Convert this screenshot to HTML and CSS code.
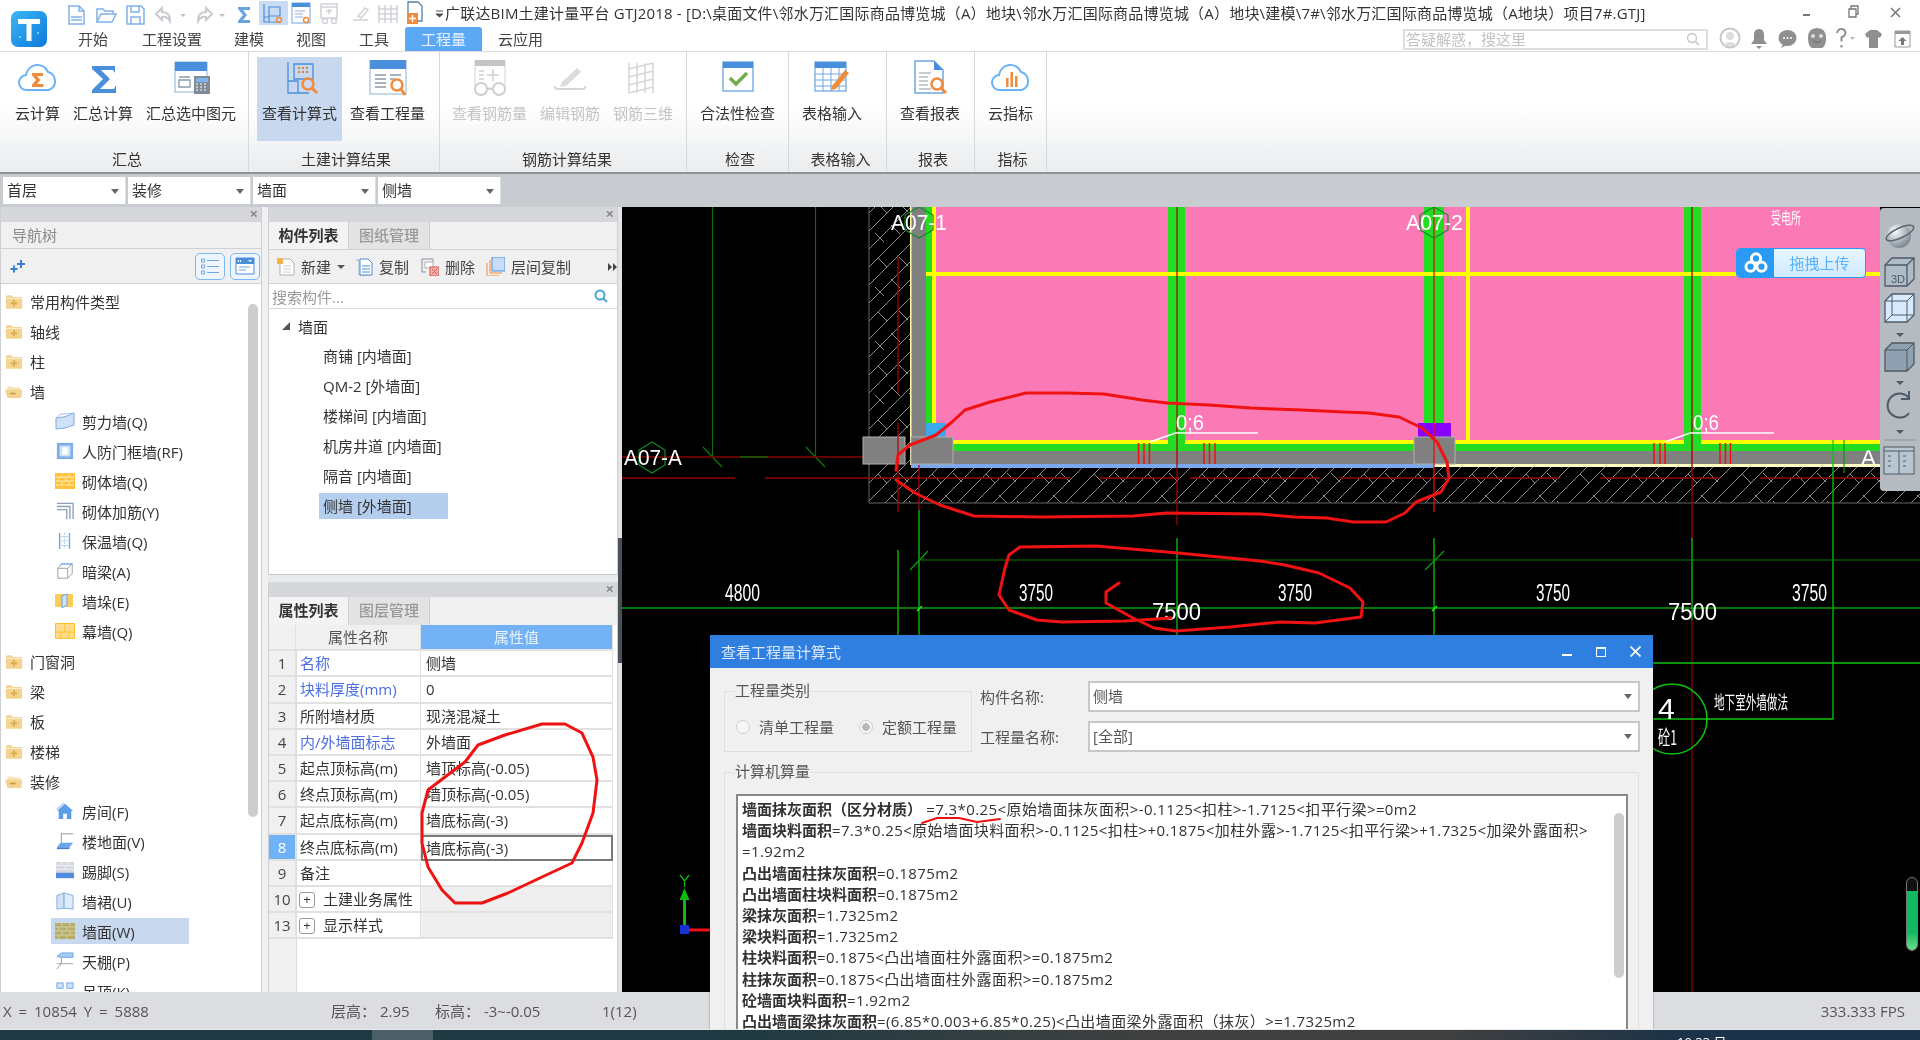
FILE: index.html
```html
<!DOCTYPE html>
<html lang="zh-CN">
<head>
<meta charset="utf-8">
<title>广联达BIM土建计量平台 GTJ2018</title>
<link rel="stylesheet" href="styles.css">
</head>
<body>
<svg class="defs" width="0" height="0" aria-hidden="true">
  <defs>
    <symbol id="folder" viewBox="0 0 20 18"><path d="M1 4 q0-2 2-2 h4 l2 2 h10 v13 H1z" fill="#f3d38f"/><path d="M1 5 h18 v1 H1z" fill="#fff3d6"/><path d="M9 7.500h2v2.500h2.500v2H11v2.500H9V12H6.500v-2H9z" fill="#dca94e"/></symbol>
    <symbol id="folder-open" viewBox="0 0 22 18"><path d="M3 3h5l2 1h9v4H3z" fill="#f8e3b4"/><path d="M0 7 h21 l-1 10 H3z" fill="#f3d38f"/><path d="M6 10.500h7v2H6z" fill="#c89a48"/></symbol>
    <symbol id="shear" viewBox="0 0 20 18"><path d="M1 6 Q10 6 19 1 V13 Q10 17 1 17z" fill="#cfe2f8" stroke="#7ba9e0"/><path d="M1 6 L6 2 Q14 2 19 1" fill="none" stroke="#9dc2ec"/></symbol>
    <symbol id="frame" viewBox="0 0 20 20"><path d="M1 1h18v18H1z" fill="#7eaee8"/><path d="M4 4h12v12H4z" fill="#cfe2f8"/><path d="M7 6h6v8H7z" fill="#fff"/></symbol>
    <symbol id="brick" viewBox="0 0 20 16"><path d="M0 0h20v16H0z" fill="#ffc23a"/><path d="M1 4h18M1 8h18M1 12h18M7 1v3M14 1v3M4 4v4M11 4v4M17 4v4M7 8v4M14 8v4" stroke="#ffe9b5" fill="none"/></symbol>
    <symbol id="rebar" viewBox="0 0 20 20"><path d="M1 1.500H19V19M1 5H15.500V19M1 8.500H12V19" fill="none" stroke="#8aa0b8" stroke-width="1.500"/></symbol>
    <symbol id="insul" viewBox="0 0 20 20"><path d="M4 1v18M15 1v18" stroke="#6ba6ea" stroke-width="1.500"/><path d="M9.500 1v18" stroke="#9cc4f0" stroke-dasharray="2 1.500"/><path d="M5 5h9M5 10h9M5 15h9" stroke="#b9d4f2"/></symbol>
    <symbol id="beam" viewBox="0 0 20 20"><path d="M2 7 L7 2 H18 V13 L13 18 H2z" fill="#fff" stroke="#8f9aa6"/><path d="M2 7H13V18M13 7 L18 2" fill="none" stroke="#8f9aa6"/><path d="M3 3 L7 1 H18 V3 H7z" fill="#8db8ec"/></symbol>
    <symbol id="stub" viewBox="0 0 20 16"><path d="M0 1h18v13H0z" fill="#ffcb57"/><path d="M7 3l5-2v11l-5 3z" fill="#cfe2f8" stroke="#6e9fdc"/></symbol>
    <symbol id="curtain" viewBox="0 0 20 16"><path d="M.500.500h19v15H.500z" fill="#ffdc8a" stroke="#ffbe2e"/><path d="M10 1v8M1 9h18M6 9v6M14 9v6" stroke="#ffbe2e" fill="none"/></symbol>
    <symbol id="room" viewBox="0 0 20 20"><path d="M10 2 L19 10 H17 V19 H12 V13 H8 V19 H3 V10 H1z" fill="#5a9eea"/><path d="M1 8 L9 1" stroke="#a8cbf2" stroke-width="1.500"/></symbol>
    <symbol id="floor" viewBox="0 0 20 20"><path d="M6 1v11" stroke="#8a9098"/><path d="M6 2h13" stroke="#8a9098"/><path d="M5 12h14l-4 5H1z" fill="#6aa6ea"/><path d="M1 17h14v2H1z" fill="#3f7fd0"/></symbol>
    <symbol id="skirt" viewBox="0 0 20 20"><path d="M0 0h20v13H0z" fill="#d5d9de"/><path d="M0 4h20M0 8h20M6 0v4M14 0v4M10 4v4" stroke="#f2f3f5" fill="none"/><path d="M0 12h20v6H0z" fill="#4f8ce0"/></symbol>
    <symbol id="dado" viewBox="0 0 20 20"><path d="M1 4 L9 1 V18 L1 19z" fill="#cfe2f8" stroke="#7ba9e0"/><path d="M9 1 L19 4 V19 L9 18z" fill="#dfecfb" stroke="#7ba9e0"/></symbol>
    <symbol id="wallface" viewBox="0 0 20 16"><path d="M0 0h20v16H0z" fill="#b6ad6a"/><path d="M0 4h20M0 8h20M0 12h20M7 0v4M15 0v4M4 4v4M12 4v4M7 8v4M15 8v4M4 12v4M12 12v4" stroke="#d4d0a2" fill="none"/></symbol>
    <symbol id="ceil" viewBox="0 0 20 20"><path d="M1 5 L6 1 H19 V6 H6z" fill="#a8cbf2" stroke="#6ba6ea"/><path d="M6 6v7M1 13H19M6 13 L1 19" stroke="#8f9aa6" fill="none"/></symbol>
    <symbol id="hang" viewBox="0 0 20 20"><path d="M1 1h7v6H1zM12 1h7v6h-7z" fill="#cfe2f8" stroke="#6ba6ea"/></symbol>
  </defs>
</svg>

<div class="app">
  <header class="top">
    <div class="logo-col">
      <svg class="logo" viewBox="0 0 36 36"><defs><linearGradient id="lg" x1="0" y1="0" x2="1" y2="1"><stop offset="0" stop-color="#3bb8f5"/><stop offset="1" stop-color="#0d78dc"/></linearGradient></defs><rect width="36" height="36" rx="7" fill="url(#lg)"/><path d="M7 8h22v5h-8.500v17h-5V13H7z" fill="#fff"/><circle cx="9" cy="26" r="1" fill="#9fe0ff"/><circle cx="27" cy="22" r="1" fill="#9fe0ff"/></svg>
    </div>
    <div class="top-main">
      <div class="title-row">
        <svg class="qat" viewBox="60 0 384 27">
          <g fill="none" stroke="#7eb2e8" stroke-width="1.500">
            <path d="M69 6h10l5 5v13H69zM79 6v5h5M71 17h11M71 20h11"/>
            <path d="M97 22V9h6l2 2h8v3M97 22l4-8h15l-4 8z"/>
            <path d="M127 6h14l3 3v15h-17zM131 6v6h8V6M131 24v-7h9v7"/>
          </g>
          <g fill="none" stroke="#c7cbd0" stroke-width="2">
            <path d="M156 14l6-6v4q8 0 8 9q-3-5-8-4v3z"/>
            <path d="M212 14l-6-6v4q-8 0-8 9q3-5 8-4v3z"/>
          </g>
          <path d="M180 14h6l-3 3zM219 14h6l-3 3z" fill="#c0c4c8"/>
          <path d="M238 7h12v3h-7l4 5-4 5h7v3h-12v-2l5-6-5-6z" fill="#6aa3e0"/>
          <rect x="259" y="1" width="29" height="24" fill="#c9dcf3"/>
          <g fill="none" stroke="#4a8fdc" stroke-width="1.200"><path d="M264 4v18h16M264 17h5v5M269 7h11v9h-11z"/></g>
          <circle cx="279" cy="20" r="2.500" fill="none" stroke="#f08c3c" stroke-width="1.500"/>
          <rect x="292" y="3" width="18" height="20" fill="#fff" stroke="#6ea6e2"/><rect x="292" y="3" width="18" height="4" fill="#4a8fdc"/><path d="M295 11h10M295 14h8M295 17h8" stroke="#8db2d9"/><circle cx="306" cy="20" r="2.500" fill="none" stroke="#f08c3c" stroke-width="1.500"/>
          <g fill="none" stroke="#cfd2d6" stroke-width="1.500"><path d="M321 4h16v14h-16zM321 7h16M326 11h6M329 9v5"/><circle cx="325" cy="21" r="2.500"/><circle cx="334" cy="21" r="2.500"/>
          <path d="M353 20h15M358 16l7-8 3 2-7 8z"/>
          <path d="M379 5v18M385 5v18M391 5v18M397 5v18M379 9h18M379 14h18M379 19h18"/></g>
          <path d="M410 2h8l4 4v15h-14V2z" fill="#fff" stroke="#5a7ea8" stroke-width="1.300"/><rect x="407" y="13" width="11" height="11" fill="#f08c3c"/><path d="M412.500 15v7M409 18.500h7" stroke="#fff" stroke-width="1.500"/>
          <path d="M436 11h7M436 14h7l-3.500 3z" fill="#555" stroke="#555"/>
        </svg>
        <div class="app-title">广联达BIM土建计量平台 GTJ2018 - [D:\桌面文件\邻水万汇国际商品博览城（A）地块\邻水万汇国际商品博览城（A）地块\建模\7#\邻水万汇国际商品博览城（A地块）项目7#.GTJ]</div>
        <svg class="winctl" viewBox="1800 0 120 27">
          <path d="M1803 14h7v2h-7z" fill="#777"/>
          <path d="M1849 9h7v8h-7zM1851 9V6h7v8h-2" fill="none" stroke="#777" stroke-width="1.300"/>
          <path d="M1891 8l9 9M1900 8l-9 9" stroke="#777" stroke-width="1.500"/>
        </svg>
      </div>
      <div class="tab-row">
        <nav class="tabs">
          <span class="tab">开始</span><span class="tab t2">工程设置</span><span class="tab">建模</span><span class="tab">视图</span><span class="tab t5">工具</span><span class="tab active">工程量</span><span class="tab">云应用</span>
        </nav>
        <div class="search">
          <span>答疑解惑，搜这里</span>
          <svg class="search-ico" viewBox="0 0 14 14"><circle cx="6" cy="6" r="4.500" fill="none" stroke="#c4c4c4" stroke-width="1.300"/><path d="M9.500 9.500l3.500 3.500" stroke="#c4c4c4" stroke-width="1.500"/></svg>
        </div>
        <svg class="user-icons" viewBox="1715 27 200 24">
          <circle cx="1731" cy="38" r="9.500" fill="#fff" stroke="#c8c8c8" stroke-width="2"/><circle cx="1731" cy="36" r="4" fill="#ddd"/><path d="M1723 46q8-8 16 0" fill="#ddd"/>
          <path d="M1760 29q5 0 5 6v5l3 4h-16l3-4v-5q0-6 5-6zM1757 46h6l-3 3z" fill="#8f8f8f"/>
          <ellipse cx="1788.500" cy="38" rx="9" ry="8" fill="#8f8f8f"/><path d="M1784 44l-2 4 6-3z" fill="#8f8f8f"/><circle cx="1785" cy="38" r="1" fill="#fff"/><circle cx="1788.500" cy="38" r="1" fill="#fff"/><circle cx="1792" cy="38" r="1" fill="#fff"/>
          <path d="M1818 28q9 0 9 10q0 8-4 10h-10q-4-2-4-10q0-10 9-10z" fill="#8f8f8f"/><circle cx="1814" cy="36" r="2" fill="#ddd"/><circle cx="1822" cy="36" r="2" fill="#ddd"/><path d="M1814 41q4 3 8 0" fill="none" stroke="#666"/>
          <path d="M1838 33q1-4 4.500-4t4 3.500q0 3-4 5v4M1842.500 45v2.500" fill="none" stroke="#8f8f8f" stroke-width="2"/><path d="M1851 37h5l-2.500 3z" fill="#bbb"/>
          <path d="M1871 30h7l5 4-2 4-2-1v11h-9V37l-2 1-2-4z" fill="#8f8f8f"/>
          <path d="M1896 31h15v16h-15z" fill="#fff" stroke="#999"/><path d="M1896 31h15v3h-15z" fill="#999"/><path d="M1903.500 37l4 4h-2.500v4h-3v-4h-2.500z" fill="#777"/>
        </svg>
      </div>
    </div>
  </header>

  <section class="ribbon">
    <div class="group g1">
      <div class="items">
        <div class="rbtn"><svg class="ricon" viewBox="0 0 40 36"><path d="M9 30a7.500 7.500 0 0 1-1-15a11.500 11.500 0 0 1 22-3a9.500 9.500 0 0 1 1 18z" fill="none" stroke="#6db3f2" stroke-width="2"/><path d="M14 13h11v3h-6l3.500 4-3.500 4h6.500v3H14v-2.500l4-4.500-4-4.500z" fill="#f08c3c"/></svg><span>云计算</span></div>
        <div class="rbtn"><svg class="ricon" viewBox="0 0 40 36"><path d="M9 6h23v7l-2-3H18l9 9-10 10h14l2-4v8H9v-3l11-11L9 9z" fill="#4a8fdc"/></svg><span>汇总计算</span></div>
        <div class="rbtn"><svg class="ricon" viewBox="0 0 40 36"><rect x="4" y="2" width="32" height="30" fill="#fff" stroke="#8db2d9"/><rect x="4" y="2" width="32" height="9" fill="#4a8fdc"/><path d="M8 17h11M8 20h11v7H8z" fill="none" stroke="#8a9aa8" stroke-width="1.300"/><rect x="23" y="16" width="16" height="18" fill="#7f8b96"/><rect x="25" y="18" width="12" height="4" fill="#7fb4ec"/><path d="M25 24h12M25 27h12M25 30h12" stroke="#fff" stroke-dasharray="2 2"/></svg><span>汇总选中图元</span></div>
      </div>
      <div class="glabel label-a">汇总</div>
    </div>
    <div class="group g2">
      <div class="items">
        <div class="rbtn on"><svg class="ricon" viewBox="0 0 40 36"><path d="M8 2v31h21M8 21h10v12M14 4h19v15H14z" fill="none" stroke="#4a8fdc" stroke-width="1.300"/><path d="M18 7h2v2h-2zM22 7h2v2h-2zM26 7h2v2h-2zM18 11h2v2h-2zM22 11h2v2h-2zM26 11h2v2h-2z" fill="#d9833f"/><circle cx="28" cy="24" r="5.500" fill="none" stroke="#f08c3c" stroke-width="2.500"/><path d="M32 28l5 5" stroke="#f08c3c" stroke-width="3"/></svg><span>查看计算式</span></div>
        <div class="rbtn"><svg class="ricon" viewBox="0 0 40 36"><rect x="2" y="0" width="36" height="34" fill="#fff" stroke="#8db2d9"/><rect x="2" y="0" width="36" height="9" fill="#4a8fdc"/><path d="M7 15h11M22 15h11M7 19h11M7 23h11M7 27h11M22 19h5" stroke="#8c99a6" stroke-width="1.300"/><circle cx="29" cy="25" r="5.500" fill="#fff" stroke="#f08c3c" stroke-width="2.500"/><path d="M33 29l4 6" stroke="#f08c3c" stroke-width="3"/></svg><span>查看工程量</span></div>
      </div>
      <div class="glabel label-b">土建计算结果</div>
    </div>
    <div class="group g3">
      <div class="items">
        <div class="rbtn off"><svg class="ricon" viewBox="0 0 40 36"><rect x="5" y="0" width="30" height="28" fill="#fff" stroke="#d4d4d4"/><rect x="5" y="0" width="30" height="6" fill="#c4c4c4"/><path d="M9 11h5M9 15h5M9 19h5M17 15h12M23 9v12" stroke="#cfcfcf" stroke-width="1.500"/><circle cx="11" cy="29" r="6" fill="#fff" stroke="#cfcfcf" stroke-width="2"/><circle cx="29" cy="29" r="6" fill="#fff" stroke="#cfcfcf" stroke-width="2"/><path d="M17 29h6" stroke="#cfcfcf" stroke-width="2"/></svg><span>查看钢筋量</span></div>
        <div class="rbtn off"><svg class="ricon" viewBox="0 0 40 36"><path d="M5 26q-1 3 3 3h24q4 0 3-3" fill="none" stroke="#d6d6d6" stroke-width="2"/><path d="M12 22l15-14 4 4-15 14-6 1z" fill="#dcdcdc"/></svg><span>编辑钢筋</span></div>
        <div class="rbtn off"><svg class="ricon" viewBox="0 0 40 36"><path d="M6 3v30M14 3v30M22 3v30M30 3v30M6 9L30 3M6 17l24-6M6 25l24-6M6 33l24-6" fill="none" stroke="#d6d6d6" stroke-width="1.500"/></svg><span>钢筋三维</span></div>
      </div>
      <div class="glabel label-c">钢筋计算结果</div>
    </div>
    <div class="group g4">
      <div class="items">
        <div class="rbtn"><svg class="ricon" viewBox="0 0 40 36"><rect x="5" y="2" width="30" height="29" fill="#fff" stroke="#7eaee8" stroke-width="1.500"/><rect x="5" y="2" width="30" height="6" fill="#4a8fdc"/><path d="M12 18l6 6 11-11" fill="none" stroke="#6fae4f" stroke-width="3.500"/></svg><span>合法性检查</span></div>
      </div>
      <div class="glabel label-d">检查</div>
    </div>
    <div class="group g5">
      <div class="items">
        <div class="rbtn"><svg class="ricon" viewBox="0 0 40 36"><rect x="3" y="2" width="31" height="29" fill="#fff" stroke="#4a8fdc"/><rect x="3" y="2" width="31" height="6" fill="#4a8fdc"/><path d="M3 14h31M3 20h31M3 26h31M11 8v23M19 8v23M27 8v23" stroke="#6ea6e2"/><path d="M20 26L33 10l4 3-13 16-5 1z" fill="#f08c3c"/></svg><span>表格输入</span></div>
      </div>
      <div class="glabel label-e">表格输入</div>
    </div>
    <div class="group g6">
      <div class="items">
        <div class="rbtn"><svg class="ricon" viewBox="0 0 40 36"><path d="M5 1h19l9 9v23H5z" fill="#fff" stroke="#6ea6e2" stroke-width="1.500"/><path d="M24 1l9 9h-9z" fill="#4a8fdc"/><path d="M9 13h12M9 17h9M9 21h9M9 25h9M9 29h12" stroke="#8c99a6"/><circle cx="27" cy="24" r="5.500" fill="#fff" stroke="#f08c3c" stroke-width="2.500"/><path d="M31 28l5 5" stroke="#f08c3c" stroke-width="3"/></svg><span>查看报表</span></div>
      </div>
      <div class="glabel label-f">报表</div>
    </div>
    <div class="group g7">
      <div class="items">
        <div class="rbtn"><svg class="ricon" viewBox="0 0 40 36"><path d="M9 30a7.500 7.500 0 0 1-1-15a11.500 11.500 0 0 1 22-3a9.500 9.500 0 0 1 1 18z" fill="none" stroke="#6db3f2" stroke-width="2"/><path d="M15 18h2.500v9H15zM19.500 12H22v15h-2.500zM24 16h2.500v11H24z" fill="#f08c3c"/></svg><span>云指标</span></div>
      </div>
      <div class="glabel label-g">指标</div>
    </div>
  </section>

  <section class="selectors">
    <div class="sel">首层</div><div class="sel">装修</div><div class="sel">墙面</div><div class="sel">侧墙</div>
  </section>

  <main class="main">
    <aside class="nav">
      <div class="panel-head"><span class="x">×</span></div>
      <div class="nav-title">导航树</div>
      <div class="nav-tools">
        <svg class="stars" viewBox="0 0 16 14"><path d="M3 6.500h2V9h2.500v2H5v2.500H3V11H.500V9H3zM10 1h2v3h3v2h-3v3h-2V6H7V4h3z" fill="#3a7fd0"/></svg>
        <div class="nav-btns">
          <span class="nbtn"><svg viewBox="0 0 20 18"><path d="M1.500 2h3v3h-3zM1.500 8h3v3h-3zM1.500 14h3v3h-3z" fill="none" stroke="#6ea6e2"/><path d="M7 3.500h12M7 9.500h12M7 15.500h12" stroke="#6ea6e2"/></svg></span>
          <span class="nbtn"><svg viewBox="0 0 20 18"><path d="M1 1h18v16H1z" fill="#fff" stroke="#4a8fdc"/><path d="M1 1h18v6H1z" fill="#4a8fdc"/><path d="M4 10h11M4 13h7" stroke="#6ea6e2"/><path d="M3 3h1v2H3zM5 3h1v2H5zM13 3h4l-2 2z" fill="#fff"/></svg></span>
        </div>
      </div>
      <div class="tree">
        <div class="row"><svg class="fi"><use href="#folder"/></svg>常用构件类型</div>
        <div class="row"><svg class="fi"><use href="#folder"/></svg>轴线</div>
        <div class="row"><svg class="fi"><use href="#folder"/></svg>柱</div>
        <div class="row"><svg class="fi"><use href="#folder-open"/></svg>墙</div>
        <div class="row l2"><svg class="ci"><use href="#shear"/></svg>剪力墙(Q)</div>
        <div class="row l2"><svg class="ci"><use href="#frame"/></svg>人防门框墙(RF)</div>
        <div class="row l2"><svg class="ci"><use href="#brick"/></svg>砌体墙(Q)</div>
        <div class="row l2"><svg class="ci"><use href="#rebar"/></svg>砌体加筋(Y)</div>
        <div class="row l2"><svg class="ci"><use href="#insul"/></svg>保温墙(Q)</div>
        <div class="row l2"><svg class="ci"><use href="#beam"/></svg>暗梁(A)</div>
        <div class="row l2"><svg class="ci"><use href="#stub"/></svg>墙垛(E)</div>
        <div class="row l2"><svg class="ci"><use href="#curtain"/></svg>幕墙(Q)</div>
        <div class="row"><svg class="fi"><use href="#folder"/></svg>门窗洞</div>
        <div class="row"><svg class="fi"><use href="#folder"/></svg>梁</div>
        <div class="row"><svg class="fi"><use href="#folder"/></svg>板</div>
        <div class="row"><svg class="fi"><use href="#folder"/></svg>楼梯</div>
        <div class="row"><svg class="fi"><use href="#folder-open"/></svg>装修</div>
        <div class="row l2"><svg class="ci"><use href="#room"/></svg>房间(F)</div>
        <div class="row l2"><svg class="ci"><use href="#floor"/></svg>楼地面(V)</div>
        <div class="row l2"><svg class="ci"><use href="#skirt"/></svg>踢脚(S)</div>
        <div class="row l2"><svg class="ci"><use href="#dado"/></svg>墙裙(U)</div>
        <div class="row l2 sel-row"><svg class="ci"><use href="#wallface"/></svg>墙面(W)</div>
        <div class="row l2"><svg class="ci"><use href="#ceil"/></svg>天棚(P)</div>
        <div class="row l2"><svg class="ci"><use href="#hang"/></svg>吊顶(K)</div>
        <div class="vbar"></div>
      </div>
    </aside>

    <div class="midcol">
      <section class="comp">
        <div class="panel-head"><span class="x">×</span></div>
        <div class="ptabs"><span class="ptab active">构件列表</span><span class="ptab">图纸管理</span></div>
        <div class="ctools">
          <svg class="cti t-new" viewBox="0 0 18 18"><path d="M3 1h10l4 4v12H3z" fill="#fff" stroke="#a9b0b8"/><path d="M6 8h8M6 11h8M6 14h8" stroke="#c8ccd0"/><path d="M0 0h6v6H0z" fill="#f6b04c"/></svg><span class="ct ct-new">新建</span><i class="caret"></i>
          <svg class="cti t-copy" viewBox="0 0 18 18"><path d="M1 2h3v15h11" fill="none" stroke="#a9b0b8"/><path d="M5 1h8l4 4v12H5z" fill="#fff" stroke="#4a8fdc"/><path d="M7 8h8M7 11h8M7 14h8" stroke="#4a8fdc"/></svg><span class="ct ct-copy">复制</span>
          <svg class="cti t-del" viewBox="0 0 18 18"><path d="M1 1h11v3M1 1v13h4" fill="none" stroke="#8a9098"/><path d="M4 4h8v6H4z" fill="#fff" stroke="#a9b0b8"/><rect x="9" y="9" width="9" height="9" fill="#f4b4ae" stroke="#d6504a"/><path d="M11 11l5 5M16 11l-5 5" stroke="#d6504a"/></svg><span class="ct ct-del">删除</span>
          <svg class="cti t-floor" viewBox="0 0 19 19"><rect x="6" y="0" width="13" height="14" fill="#c8dcf6" stroke="#4a8fdc"/><path d="M4 3v13h12M1 6v13h12" fill="none" stroke="#f08c3c"/></svg><span class="ct ct-floor">层间复制</span>
          <svg class="more" viewBox="0 0 10 8"><path d="M0 0l4 4-4 4zM5 0l4 4-4 4z" fill="#444"/></svg>
        </div>
        <div class="csearch"><span>搜索构件...</span><svg viewBox="0 0 14 14"><circle cx="6" cy="6" r="4.500" fill="none" stroke="#4aa3d8" stroke-width="2"/><path d="M9.500 9.500l3.500 3.500" stroke="#4aa3d8" stroke-width="2"/></svg></div>
        <div class="ctree">
          <div class="crow root"><i class="tri"></i>墙面</div>
          <div class="crow"><span>商铺 [内墙面]</span></div>
          <div class="crow"><span>QM-2 [外墙面]</span></div>
          <div class="crow"><span>楼梯间 [内墙面]</span></div>
          <div class="crow"><span>机房井道 [内墙面]</span></div>
          <div class="crow"><span>隔音 [内墙面]</span></div>
          <div class="crow cur"><span>侧墙 [外墙面]</span></div>
        </div>
      </section>
      <div class="hsplit"></div>
      <section class="props">
        <div class="panel-head"><span class="x">×</span></div>
        <div class="ptabs tall"><span class="ptab active">属性列表</span><span class="ptab">图层管理</span></div>
        <div class="ptable">
          <div class="grid">
            <div class="c idx"></div><div class="c hd">属性名称</div><div class="c hd val">属性值</div>
            <div class="c idx">1</div><div class="c nm link">名称</div><div class="c">侧墙</div>
            <div class="c idx">2</div><div class="c nm link">块料厚度(mm)</div><div class="c">0</div>
            <div class="c idx">3</div><div class="c nm">所附墙材质</div><div class="c">现浇混凝土</div>
            <div class="c idx">4</div><div class="c nm link">内/外墙面标志</div><div class="c">外墙面</div>
            <div class="c idx">5</div><div class="c nm">起点顶标高(m)</div><div class="c">墙顶标高(-0.05)</div>
            <div class="c idx">6</div><div class="c nm">终点顶标高(m)</div><div class="c">墙顶标高(-0.05)</div>
            <div class="c idx">7</div><div class="c nm">起点底标高(m)</div><div class="c">墙底标高(-3)</div>
            <div class="c idx cur">8</div><div class="c nm">终点底标高(m)</div><div class="c focus">墙底标高(-3)</div>
            <div class="c idx">9</div><div class="c nm">备注</div><div class="c"></div>
            <div class="c idx">10</div><div class="c nm grp"><i class="plus">+</i>土建业务属性</div><div class="c shade"></div>
            <div class="c idx">13</div><div class="c nm grp"><i class="plus">+</i>显示样式</div><div class="c shade"></div>
          </div>
        </div>
      </section>
    </div>

    <div class="vsplit"><div class="vthumb"></div></div>

    <div class="cad">
      <svg class="drawing" viewBox="622 207 1298 785" preserveAspectRatio="none">
        <defs>
          <pattern id="hatch" width="54" height="54" patternUnits="userSpaceOnUse" x="869" y="465">
            <path d="M-4 22L22-4M-4 40L40-4M-4 58L58-4M14 58L58 14M32 58L58 32M9 9l9 9M30 8l9 9M22 30l9 9M40 36l9 9M6 38l9 9" stroke="#8c8c8c" fill="none"/>
          </pattern>
        </defs>
        <rect x="622" y="207" width="1298" height="785" fill="#000"/>
        <rect x="869" y="207" width="42" height="296" fill="url(#hatch)"/>
        <rect x="869" y="465" width="1051" height="38" fill="url(#hatch)"/>
        <path d="M869 207V503H1920" fill="none" stroke="#666"/>
        <rect x="936" y="207" width="944" height="233" fill="#fb7ab6"/>
        <!-- dark axis lines -->
        <path d="M712.500 207V457M815.500 207V457" stroke="#0a6a0a" stroke-width="1.200"/>
        <path d="M703 447l19 20M806 447l19 20" stroke="#0a7a0a" stroke-width="1.200"/>
        <path d="M622 457H863" stroke="#8a0000" stroke-width="1.400"/>
        <path d="M740 457h28" stroke="#0a6a0a" stroke-width="1.400"/>
        <path d="M622 478H735M765 478H1070M1100 478H1180M1190 478H1320M1340 478H1560M1600 478H1720M1760 478H1880" stroke="#9a0000" stroke-width="1.400"/>
        <!-- walls -->
        <rect x="911" y="207" width="15" height="258" fill="#808080"/>
        <rect x="910" y="207" width="1.500" height="258" fill="#ffffa8"/>
        <rect x="926" y="207" width="6" height="243" fill="#22dd22"/>
        <rect x="932" y="207" width="4" height="237" fill="#ffff00"/>
        <rect x="926" y="444" width="954" height="7" fill="#22dd22"/>
        <rect x="936" y="440" width="944" height="4" fill="#ffff00"/>
        <rect x="1168" y="207" width="17" height="243" fill="#22dd22"/>
        <rect x="1424" y="207" width="20" height="243" fill="#22dd22"/>
        <rect x="1684" y="207" width="17" height="243" fill="#22dd22"/>
        <rect x="1466" y="207" width="4" height="237" fill="#ffff00"/>
        <rect x="926" y="272" width="954" height="4" fill="#ffff00"/>
        <rect x="911" y="451" width="969" height="13" fill="#808080"/>
        <rect x="911" y="464" width="523" height="4" fill="#7aa8ef"/>
        <rect x="1434" y="464" width="446" height="3" fill="#ffffc4"/>
        <rect x="926" y="423" width="20" height="14" fill="#3ca8f0"/>
        <rect x="1418" y="423" width="33" height="14" fill="#8a00ff"/>
        <g fill="#808080" stroke="#b0b0b0"><rect x="863" y="437" width="42" height="27"/><rect x="911" y="437" width="42" height="27"/><rect x="1414" y="437" width="41" height="27"/></g>
        <path d="M1138.500 443v21M1144 443v21M1149.500 443v21M1204 443v21M1209.500 443v21M1215 443v21M1654 443v21M1660 443v21M1665 443v21M1720 443v21M1725.500 443v21M1730.500 443v21" stroke="#ee1111" stroke-width="1.500"/>
        <!-- verticals -->
        <path d="M898 257V393M898 423V512M919 465V510" stroke="#b00000" stroke-width="1.200"/>
        <path d="M1177 207V525" stroke="#a00000" stroke-width="1.200"/>
        <path d="M1434 207V512" stroke="#e01010" stroke-width="1.300"/>
        <path d="M1692 207V540" stroke="#a00000" stroke-width="1.300"/>
        <path d="M1692 620V992" stroke="#8a0000" stroke-width="1.300"/>
        <path d="M1177 538V640M1434 538V640M1692 538V620M898 550V640M919 510V640M1833 440V719" stroke="#0cc40c" stroke-width="1.300"/>
        <path d="M1844 440V473" stroke="#0a9a0a" stroke-width="1.200"/>
        <path d="M919 560H1920" stroke="#0a7a0a" stroke-width="1.200"/>
        <path d="M622 608H1920" stroke="#0aa00a" stroke-width="1.500"/>
        <path d="M1653 663H1920M1653 719H1833" stroke="#0cc40c" stroke-width="1.300"/>
        <path d="M910 570l18-19M1425 570l19-19" stroke="#0aa00a" stroke-width="1.200"/>
        <path d="M917 611l5-5M1432 611l5-5" stroke="#2dea2d" stroke-width="1.500"/>
        <polygon points="919,207 933,215 933,230 919,238 905,230 905,215" fill="none" stroke="#0f8a2a" stroke-width="1.200"/>
        <polygon points="1434,207 1448,215 1448,230 1434,238 1420,230 1420,215" fill="none" stroke="#0f8a2a" stroke-width="1.200"/>
        <polygon points="652,442 665,450 665,465 652,473 639,465 639,450" fill="none" stroke="#0f8a2a" stroke-width="1.200"/>
        <circle cx="1672" cy="719" r="35" fill="none" stroke="#0cc40c" stroke-width="1.500"/>
        <!-- leaders -->
        <path d="M1150 442L1175.500 433H1258M1665 442L1690 433H1774" fill="none" stroke="#fff" stroke-width="1.500"/>
        <!-- drawing text -->
        <g class="cadtxt">
          <text x="891" y="230" font-size="22" textLength="56" lengthAdjust="spacingAndGlyphs">A07-1</text>
          <text x="1406" y="230" font-size="22" textLength="57" lengthAdjust="spacingAndGlyphs">A07-2</text>
          <text x="624" y="465" font-size="22" textLength="58" lengthAdjust="spacingAndGlyphs">A07-A</text>
          <text x="1861" y="465" font-size="22">A</text>
          <text x="1176" y="430" font-size="22" textLength="28" lengthAdjust="spacingAndGlyphs">0;6</text>
          <text x="1693" y="430" font-size="22" textLength="26" lengthAdjust="spacingAndGlyphs">0;6</text>
          <text x="725" y="601" font-size="24" textLength="35" lengthAdjust="spacingAndGlyphs">4800</text>
          <text x="1019" y="601" font-size="24" textLength="34" lengthAdjust="spacingAndGlyphs">3750</text>
          <text x="1278" y="601" font-size="24" textLength="34" lengthAdjust="spacingAndGlyphs">3750</text>
          <text x="1536" y="601" font-size="24" textLength="34" lengthAdjust="spacingAndGlyphs">3750</text>
          <text x="1792" y="601" font-size="24" textLength="35" lengthAdjust="spacingAndGlyphs">3750</text>
          <text x="1152" y="620" font-size="24" textLength="49" lengthAdjust="spacingAndGlyphs">7500</text>
          <text x="1668" y="620" font-size="24" textLength="49" lengthAdjust="spacingAndGlyphs">7500</text>
          <text x="1771" y="224" font-size="16" class="cjk" textLength="30" lengthAdjust="spacingAndGlyphs">受电所</text>
          <text x="1658" y="719" font-size="30">4</text>
          <text x="1658" y="745" font-size="20" class="cjk" textLength="19" lengthAdjust="spacingAndGlyphs">砼1</text>
          <text x="1714" y="709" font-size="18" class="cjk" textLength="74" lengthAdjust="spacingAndGlyphs">地下室外墙做法</text>
        </g>
        <!-- axis gizmo -->
        <path d="M684.500 930V893" stroke="#0fb80f" stroke-width="3"/><path d="M684.500 888l-5 12h10z" fill="#0fb80f"/>
        <path d="M684.500 930H712" stroke="#f01010" stroke-width="3"/>
        <rect x="680" y="925" width="9" height="9" fill="#1a30d0"/>
        <path d="M680 875l4.500 6 4.500-6M684.500 881v6" fill="none" stroke="#0fb80f" stroke-width="1.300"/>
      </svg>
      <div class="upload">
        <span class="up-ico"><svg viewBox="0 0 26 24"><g fill="none" stroke="#fff" stroke-width="3.200"><circle cx="13" cy="7" r="5"/><circle cx="7" cy="16" r="5"/><circle cx="19" cy="16" r="5"/></g></svg></span>
        <span class="up-txt">拖拽上传</span>
      </div>
      <div class="toolstrip">
        <svg viewBox="1880 208 40 283">
          <defs><radialGradient id="ball" cx=".35" cy=".3" r=".8"><stop offset="0" stop-color="#fff"/><stop offset="1" stop-color="#6c7a88"/></radialGradient></defs>
          <circle cx="1899" cy="236" r="12" fill="url(#ball)"/><ellipse cx="1900" cy="233" rx="15" ry="5" fill="none" stroke="#5c6670" stroke-width="1.500" transform="rotate(-25 1900 233)"/>
          <path d="M1885 265l7-7h22v21l-7 7h-22z" fill="#aebcc8" stroke="#4e5a66" stroke-width="1.300"/>
          <path d="M1885 265h22v21M1907 265l7-7" fill="none" stroke="#4e5a66" stroke-width="1.300"/>
          <text x="1891" y="283" class="tool3d">3D</text>
          <path d="M1885 301l7-7h22v21l-7 7h-22z" fill="#d8ebfd" stroke="#4e5a66" stroke-width="1.300"/>
          <path d="M1885 301h22v21M1907 301l7-7M1892 294v21h22M1892 315l-7 7" fill="none" stroke="#4e5a66"/>
          <path d="M1885 350l7-7h22v21l-7 7h-22z" fill="#8fa0b0" stroke="#4e5a66" stroke-width="1.300"/>
          <path d="M1885 350h22v21M1907 350l7-7" fill="none" stroke="#4e5a66"/>
          <path d="M1896 333h8l-4 4zM1896 381h8l-4 4zM1896 430h8l-4 4z" fill="#4e5a66"/>
          <path d="M1909 413a12 12 0 1 1 0-15M1909 391v8h-8" fill="none" stroke="#4e5a66" stroke-width="2"/>
          <path d="M1884 440h32" stroke="#8a949e"/>
          <rect x="1884" y="447" width="30" height="27" fill="#b9c6d2" stroke="#4e5a66"/><path d="M1884 451h30M1899 451v23M1888 456h3M1888 461h3M1888 466h3M1903 456h3M1903 461h3M1903 466h3" stroke="#4e5a66"/>
        </svg>
      </div>
      <div class="gauge"><div class="gauge-fill"></div></div>
    </div>
  </main>

  <footer class="status">
    <span class="s1">X = 10854 Y = 5888</span>
    <span class="s2">层高： 2.95</span>
    <span class="s3">标高： -3~-0.05</span>
    <span class="s4">1(12)</span>
    <span class="s5">333.333 FPS</span>
  </footer>
  <div class="taskbar"><span class="task-active"></span><span class="clock">10:33 日</span></div>

  <section class="dialog">
    <div class="dlg-bar">
      <span>查看工程量计算式</span>
      <div class="dlg-ctl">
        <i class="c-min"></i><i class="c-max"></i>
        <svg viewBox="0 0 10 10"><path d="M.500.500l9 9M9.500.500l-9 9" stroke="#fff" stroke-width="1.500"/></svg>
      </div>
    </div>
    <div class="dlg-body">
      <div class="dlg-top">
        <fieldset class="fs kind">
          <legend>工程量类别</legend>
          <div class="radios">
            <span class="radio"><i></i>清单工程量</span>
            <span class="radio on"><i></i>定额工程量</span>
          </div>
        </fieldset>
        <div class="form">
          <div class="frow"><label>构件名称:</label><div class="combo">侧墙</div></div>
          <div class="frow"><label>工程量名称:</label><div class="combo">[全部]</div></div>
        </div>
      </div>
      <fieldset class="fs calc">
        <legend>计算机算量</legend>
        <div class="formula">
          <p><b>墙面抹灰面积（区分材质）</b> =7.3*0.25&lt;原始墙面抹灰面积&gt;-0.1125&lt;扣柱&gt;-1.7125&lt;扣平行梁&gt;=0m2</p>
          <p><b>墙面块料面积</b>=7.3*0.25&lt;原始墙面块料面积&gt;-0.1125&lt;扣柱&gt;+0.1875&lt;加柱外露&gt;-1.7125&lt;扣平行梁&gt;+1.7325&lt;加梁外露面积&gt;</p>
          <p>=1.92m2</p>
          <p><b>凸出墙面柱抹灰面积</b>=0.1875m2</p>
          <p><b>凸出墙面柱块料面积</b>=0.1875m2</p>
          <p><b>梁抹灰面积</b>=1.7325m2</p>
          <p><b>梁块料面积</b>=1.7325m2</p>
          <p><b>柱块料面积</b>=0.1875&lt;凸出墙面柱外露面积&gt;=0.1875m2</p>
          <p><b>柱抹灰面积</b>=0.1875&lt;凸出墙面柱外露面积&gt;=0.1875m2</p>
          <p><b>砼墙面块料面积</b>=1.92m2</p>
          <p><b>凸出墙面梁抹灰面积</b>=(6.85*0.003+6.85*0.25)&lt;凸出墙面梁外露面积（抹灰）&gt;=1.7325m2</p>
          <div class="fbar"></div>
        </div>
      </fieldset>
    </div>
  </section>

  <svg class="marks" viewBox="0 0 1920 1040">
    <g fill="none" stroke="#f01212" stroke-width="3" stroke-linejoin="round" stroke-linecap="round">
      <path d="M465 762L478 745L505 735L542 724L565 724L582 733L593 757L597 780L593 813L582 843L572 863L542 877L508 893L482 903L455 903L442 890L428 867L422 843L422 813L428 790L445 777L465 762"/>
      <path d="M896 470L898 455L910 445L936 435L952 422L965 410L990 402L1026 393L1066 393L1104 394L1142 400L1167 403L1209 405L1251 408L1302 410L1344 412L1369 413L1399 417L1422 428L1437 442L1447 462L1449 478L1441 492L1416 502L1405 513L1386 522L1353 522L1327 518L1294 517L1260 514L1167 513L1133 516L1041 517L974 516L940 505L915 493L896 480"/>
      <path d="M1119 583L1106 592L1106 603L1133 618L1154 628L1176 631L1230 627L1280 622L1315 623L1361 617L1363 602L1350 588L1319 573L1285 565L1260 561L1230 558L1167 552L1096 546L1020 547L1009 555L1005 568L999 595L1009 610L1037 620L1062 622L1125 621L1171 618"/>
      <path d="M922 823L937 818L959 818L977 822L1000 819" stroke-width="2"/>
    </g>
  </svg>
</div>
</body>
</html>
```

FILE: styles.css
```css
* { box-sizing: border-box; }
html, body { margin: 0; padding: 0; background: #eef0f2; }
body {
  font-family: "Open Sans", "Noto Sans CJK SC", "Noto Sans", sans-serif;
  font-size: 15px;
  color: #333;
}
.defs { position: absolute; }
.app {
  position: relative;
  width: 1920px;
  height: 1040px;
  overflow: hidden;
  display: flex;
  flex-direction: column;
  background: #eef0f2;
  filter: blur(0.4px);
}

/* top bar */
.top { display: flex; height: 52px; background: #fff; border-bottom: 1px solid #dcdcdc; flex: none; }
.logo-col { width: 60px; padding: 11px 0 0 11px; }
.logo { width: 36px; height: 36px; display: block; }
.top-main { flex: 1; display: flex; flex-direction: column; min-width: 0; }
.title-row { display: flex; height: 27px; align-items: flex-start; }
.qat { width: 384px; height: 27px; flex: none; }
.app-title { margin-left: 1px; line-height: 26px; white-space: nowrap; flex: none; color: #333; letter-spacing: .2px; }
.winctl { margin-left: auto; width: 120px; height: 27px; flex: none; }
.tab-row { display: flex; height: 24px; align-items: center; }
.tabs { display: flex; padding-left: 2px; height: 24px; }
.tab { padding: 0 16px; line-height: 24px; color: #444; white-space: nowrap; }
.t2 { margin-left: 2px; }
.t5 { margin-left: 1px; }
.tab.active { background: #5ba8f5; color: #e8f2fd; border-radius: 3px 3px 0 0; }
.search {
  margin-left: 844px; width: 305px; height: 21px; border: 2px solid #dedede;
  display: flex; align-items: center; justify-content: space-between;
  padding: 0 6px 0 1px; color: #c2c2c2; line-height: 17px; flex: none;
}
.search-ico { width: 14px; height: 14px; }
.user-icons { width: 200px; height: 24px; margin-left: 6px; flex: none; }

/* ribbon */
.ribbon {
  flex: none; height: 120px;
  display: grid;
  grid-template-columns: 249px 191px 247px 102px 98px 88px 72px;
  background: linear-gradient(#fff 45%, #eaecee 100%);
}
.group { display: flex; flex-direction: column; border-right: 1px solid #d6d8da; padding: 5px 0 3px 8px; }
.g1 { padding-left: 10px; }
.g3 { padding-left: 7px; }
.items { display: flex; gap: 3px; height: 84px; }
.rbtn { display: flex; flex-direction: column; align-items: center; padding: 3px 5px 0; white-space: nowrap; color: #333; }
.rbtn span { line-height: 20px; margin-top: 7px; }
.ricon { width: 40px; height: 36px; display: block; }
.rbtn.on { background: #c7d8ef; }
.rbtn.off { color: #c4c4c4; }
.glabel { margin-top: auto; line-height: 20px; color: #333; text-align: center; }
.label-a { width: 234px; }
.label-b { width: 180px; margin-left: -1px; }
.label-c { width: 240px; }
.label-d { width: 90px; }
.label-e { width: 87px; }
.label-f { width: 76px; }
.label-g { width: 59px; }

/* selectors */
.selectors {
  flex: none; height: 35px; display: flex; gap: 2px; padding: 3px 0 0 3px;
  background: #c8cbd0; border-top: 2px solid #8e9297;
}
.sel {
  position: relative; width: 123px; height: 27px; background: #fff; padding-left: 4px;
  line-height: 26px; color: #333; border-right: 1px solid #ddd;
}
.sel::after, .combo::after {
  content: ""; position: absolute; top: 12px; right: 6px;
  border: 4px solid transparent; border-top: 5px solid #666; border-bottom: 0;
}

/* main */
.main { flex: none; height: 785px; display: flex; }
.panel-head { height: 15px; background: #d5d7db; position: relative; flex: none; }
.x { position: absolute; right: 3px; top: -3px; line-height: 18px; color: #8a8a8a; font-size: 15px; font-weight: 700; }
.nav { width: 262px; display: flex; flex-direction: column; background: #fff; border-right: 1px solid #cdcfd2; border-left: 1px solid #cdcfd2; flex: none; }
.nav-title { height: 27px; background: #f0f0f0; border-bottom: 1px solid #cfd1d4; color: #8a8a8a; padding-left: 11px; line-height: 27px; flex: none; }
.nav-tools { height: 35px; background: #f0f0f0; border-bottom: 1px solid #cfd1d4; display: flex; align-items: center; justify-content: space-between; padding: 0 1px 0 9px; flex: none; }
.stars { width: 16px; height: 14px; }
.nav-btns { display: flex; gap: 5px; }
.nbtn { width: 30px; height: 27px; border: 1px solid #7db7f0; border-radius: 5px; display: flex; align-items: center; justify-content: center; background: #eef5fd; }
.nbtn svg { width: 20px; height: 18px; }
.tree { flex: 1; position: relative; overflow: hidden; padding-top: 2px; color: #333; }
.row { display: flex; align-items: center; height: 30px; padding-left: 4px; gap: 7px; white-space: nowrap; }
.fi { width: 18px; height: 17px; flex: none; }
.row.l2 { margin-left: 50px; width: 138px; padding-left: 4px; }
.ci { width: 20px; height: 18px; flex: none; }
.sel-row { height: 26px; margin-top: 2px; margin-bottom: 2px; background: #c7d8ef; }
.vbar { position: absolute; left: 247px; top: 20px; width: 10px; height: 513px; border-radius: 5px; background: #cdcdcd; }

.midcol { width: 350px; margin-left: 6px; display: flex; flex-direction: column; flex: none; }
.comp { height: 368px; display: flex; flex-direction: column; background: #fff; border-left: 1px solid #cdcfd2; border-right: 1px solid #cdcfd2; border-bottom: 1px solid #c4c6c9; flex: none; }
.ptabs { height: 28px; display: flex; background: #f0f0f0; border-bottom: 1px solid #cfd1d4; padding-left: 0; flex: none; }
.ptab { width: 81px; text-align: center; line-height: 27px; color: #999; background: #e3e3e3; border-right: 1px solid #d0d0d0; font-weight: 500; }
.ptab.active { background: #f3f3f3; color: #333; font-weight: 700; width: 80px; }
.ctools { height: 34px; background: #f0f0f0; border-bottom: 1px solid #cfd1d4; position: relative; display: flex; align-items: center; padding-left: 8px; color: #444; flex: none; }
.cti { width: 18px; height: 18px; flex: none; }
.ct { margin-left: 6px; white-space: nowrap; }
.ct-new { width: 30px; }
.caret { margin-left: 6px; border: 4px solid transparent; border-top: 4px solid #555; border-bottom: 0; }
.t-copy { margin-left: 10px; }
.ct-copy { width: 30px; }
.t-del { margin-left: 12px; }
.t-floor { margin-left: 11px; width: 19px; height: 19px; }
.ct-floor { margin-left: 6px; }
.more { margin-left: 37px; width: 10px; height: 8px; flex: none; }
.csearch { height: 25px; display: flex; align-items: center; justify-content: space-between; padding: 0 9px 0 3px; color: #9a9a9a; border-bottom: 1px solid #d8dadc; flex: none; }
.csearch svg { width: 14px; height: 14px; }
.ctree { flex: 1; padding-top: 2px; }
.crow { height: 30px; padding-left: 50px; display: flex; align-items: center; white-space: nowrap; }
.crow span { display: block; padding: 0 36px 0 4px; line-height: 26px; height: 26px; }
.crow.root { padding-left: 13px; gap: 8px; }
.tri { width: 0; height: 0; border-style: solid; border-width: 0 0 8px 8px; border-color: transparent transparent #555 transparent; }
.crow.cur span { background: #b4cfee; }

.hsplit { height: 7px; background: #e8eaec; flex: none; }
.props { flex: 1; display: flex; flex-direction: column; background: #fff; border-left: 1px solid #cdcfd2; border-right: 1px solid #cdcfd2; min-height: 0; }
.ptabs.tall { border-bottom: 0; }
.ptable { flex: 1; background: linear-gradient(90deg, #f0f0f0 27px, #ddd 27px, #ddd 28px, #fff 28px); }
.grid { display: grid; grid-template-columns: 27px 125px 192px; grid-auto-rows: 26.2px; }
.c { border-bottom: 2px solid #e1e1e1; border-right: 1px solid #e1e1e1; padding-left: 5px; line-height: 24px; white-space: nowrap; color: #333; overflow: hidden; }
.idx { background: #f0f0f0; text-align: center; padding: 0; color: #444; }
.idx.cur { background: #6fb2f5; color: #fff; }
.hd { background: #f0f0f0; text-align: center; padding: 0; color: #555; }
.hd.val { background: #73b3f5; color: #e8f2fd; }
.nm { padding-left: 4px; }
.link { color: #4a6ee0; }
.focus { border: 2px solid #777; line-height: 22px; padding-left: 3px; }
.shade { background: #efefef; }
.grp { padding-left: 3px; }
.plus { display: inline-block; width: 16px; height: 16px; border: 1px solid #999; border-radius: 3px; font-style: normal; line-height: 13px; text-align: center; font-size: 13px; margin-right: 8px; vertical-align: 1px; }

.vsplit { width: 4px; background: #e2e4e6; flex: none; padding-top: 331px; }
.vthumb { height: 125px; background: #4a5057; }

.cad { flex: 1; position: relative; background: #000; overflow: hidden; }
.drawing { display: block; width: 1298px; height: 785px; }
.cadtxt { fill: #fff; font-family: "Liberation Sans", sans-serif; }
.cjk { font-family: "Noto Sans CJK SC", sans-serif; }
.tool3d { fill: #4e5a66; font-family: "Liberation Sans", sans-serif; font-size: 11px; }
.upload { position: absolute; left: 1114px; top: 41px; width: 130px; height: 30px; display: flex; border-radius: 4px; border: 1px solid #2a9bf5; overflow: hidden; background: linear-gradient(#e8f5ff, #cfeaff); }
.up-ico { width: 37px; background: #2a9bf5; display: flex; align-items: center; justify-content: center; }
.up-ico svg { width: 24px; height: 22px; }
.up-txt { flex: 1; text-align: center; color: #5ab4f5; line-height: 28px; }
.toolstrip { position: absolute; right: 0; top: 1px; width: 40px; height: 283px; background: #b5bbc0; border-radius: 4px 0 0 4px; }
.toolstrip svg { width: 40px; height: 283px; display: block; }
.gauge { position: absolute; left: 1284px; top: 670px; width: 12px; height: 74px; border: 1px solid #777; border-radius: 6px; background: #111; overflow: hidden; display: flex; align-items: flex-end; }
.gauge-fill { width: 100%; height: 59px; background: linear-gradient(#10b860 70%, #6fe08c); }

/* status and task bars */
.status { flex: none; height: 37px; background: #dcdde0; display: flex; align-items: center; color: #555; padding-left: 3px; white-space: nowrap; }
.s1 { width: 328px; word-spacing: 3px; }
.s2 { width: 104px; }
.s3 { width: 167px; }
.s4 { width: 100px; }
.s5 { margin-left: auto; margin-right: 15px; }
.taskbar { flex: none; height: 11px; position: relative; z-index: 3; overflow: hidden; padding-left: 372px; display: flex; background: linear-gradient(90deg, #1f3a42 0 38%, #404040 60%, #404040 75%, #1c3248 88%); border-top: 1px solid #e8e8e8; }
.task-active { width: 61px; background: #4c5f66; }
.clock { margin-left: 1244px; color: #fff; font-size: 13px; line-height: 13px; padding-top: 6px; }

/* dialog */
.dialog { position: absolute; left: 710px; top: 635px; width: 943px; height: 405px; background: #f0f0f0; z-index: 1; overflow: hidden; box-shadow: 0 0 2px rgba(0,0,0,.4); }
.dlg-bar { height: 33px; background: #2e7fe0; display: flex; align-items: center; justify-content: space-between; padding: 0 12px 0 11px; color: #dce9fb; }
.dlg-ctl { display: flex; align-items: center; gap: 24px; }
.c-min { width: 10px; height: 2px; background: #fff; margin-top: 6px; }
.c-max { width: 10px; height: 10px; border: 1px solid #fff; border-top-width: 2px; }
.dlg-ctl svg { width: 11px; height: 11px; }
.dlg-body { padding: 13px 13px 0 14px; }
.dlg-top { display: flex; gap: 8px; height: 71px; }
.fs { margin: 0; padding: 0; border: 1px solid #dfdfdf; min-width: 0; }
.fs legend { margin-left: 10px; padding: 0 0 2px; line-height: 18px; color: #555; }
.kind { width: 248px; }
.radios { display: flex; padding: 16px 0 0 11px; gap: 25px; color: #555; }
.radio { display: flex; align-items: center; gap: 9px; white-space: nowrap; line-height: 20px; }
.radio i { width: 14px; height: 14px; border-radius: 50%; border: 1px solid #cfcfcf; background: #f6f6f6; display: block; }
.radio.on i { background: radial-gradient(circle, #b8b8b8 0 3.500px, #f6f6f6 4px); }
.form { display: flex; flex-direction: column; gap: 9px; flex: 1; }
.frow { display: flex; height: 31px; align-items: center; }
.frow label { width: 108px; color: #555; white-space: nowrap; }
.combo { position: relative; flex: 1; height: 31px; border: 2px solid #c8c8c8; background: #fff; padding-left: 3px; line-height: 26px; color: #555; }
.combo::after { right: 6px; top: 11px; }
.calc { margin-top: 10px; width: 915px; padding: 12px 10px 0 11px; height: 400px; }
.calc legend { margin-left: -1px; }
.formula { position: relative; height: 340px; border: 2px solid #888; background: #fff; padding: 3px 0 0 4px; color: #333; white-space: nowrap; }
.formula p { margin: 0; line-height: 21.200px; letter-spacing: .4px; }
.formula b { font-weight: 700; letter-spacing: 0; }
.fbar { position: absolute; left: 876px; top: 17px; width: 10px; height: 165px; border-radius: 5px; background: #cdcdcd; }

.marks { position: absolute; left: 0; top: 0; width: 1920px; height: 1040px; z-index: 2; pointer-events: none; }
```
